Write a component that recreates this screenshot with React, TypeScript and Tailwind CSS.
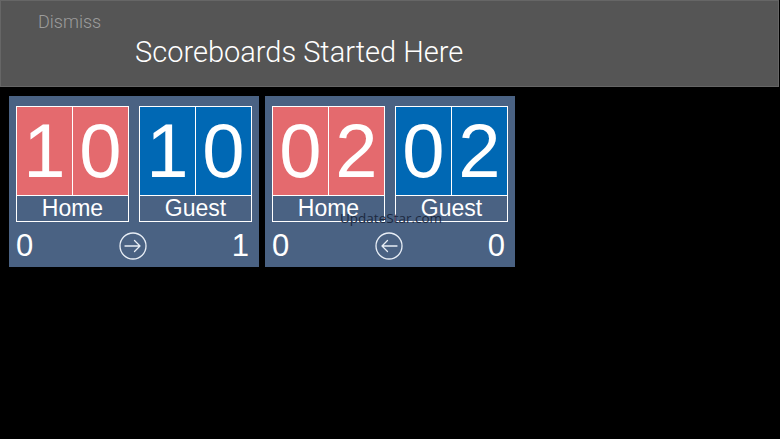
import React from "react";

type Board = {
  home: string;
  guest: string;
  left: string;
  right: string;
  dir: "right" | "left";
};

const boards: Board[] = [
  { home: "10", guest: "10", left: "0", right: "1", dir: "right" },
  { home: "02", guest: "02", left: "0", right: "0", dir: "left" },
];

const ScoreBox = ({ value, label, color }: { value: string; label: string; color: string }) => {
  return (
    <div className="flex flex-col border-[1.5px] border-white">
      <div className={`flex h-[88px] ${color}`}>
        {value.split("").map((d, i) => (
          <div
            key={i}
            className={`flex flex-1 items-center justify-center text-[76px] leading-none text-white ${
              i === 0 ? "border-r-[1.5px] border-white" : ""
            }`}
          >
            {d}
          </div>
        ))}
      </div>
      <div className="flex h-[26px] items-center justify-center border-t-[1.5px] border-white text-[23px] leading-none text-white">
        {label}
      </div>
    </div>
  );
};

const Arrow = ({ dir }: { dir: "right" | "left" }) => (
  <svg width="28" height="28" viewBox="0 0 28 28" fill="none" stroke="#e8eef6" strokeWidth="1.3">
    <circle cx="14" cy="14" r="13" />
    {dir === "right" ? (
      <path d="M6 14h15M15.5 8.5L21 14l-5.5 5.5" strokeLinecap="round" strokeLinejoin="round" />
    ) : (
      <path d="M22 14H7M12.5 8.5L7 14l5.5 5.5" strokeLinecap="round" strokeLinejoin="round" />
    )}
  </svg>
);

export default function App() {
  return (
    <div
      className="relative h-[439px] w-[780px] overflow-hidden bg-black"
      style={{ fontFamily: '"Liberation Sans", Arial, sans-serif' }}
    >
      <div className="h-[87px] w-[779px] border border-[#666] bg-[#555555]">
        <div
          className="pl-[37px] pt-[10px] text-[18px] font-light leading-[22px] text-[#9c9c9c]"
          style={{ fontFamily: 'Roboto, "Liberation Sans", sans-serif' }}
        >
          Dismiss
        </div>
        <div
          className="pl-[134px] pt-[1px] text-[29px] font-light leading-[36px] text-white"
          style={{ fontFamily: 'Roboto, "Liberation Sans", sans-serif' }}
        >
          Scoreboards Started Here
        </div>
      </div>

      <div className="flex gap-[6px] pl-[9px] pt-[9px]">
        {boards.map((b, i) => (
          <div key={i} className="flex h-[171px] w-[250px] flex-col bg-[#4a6283] px-[7px] pt-[10px]">
            <div className="grid grid-cols-2 gap-[10px]">
              <ScoreBox value={b.home} label="Home" color="bg-[#e46a6e]" />
              <ScoreBox value={b.guest} label="Guest" color="bg-[#0068b4]" />
            </div>
            <div className="flex items-center justify-between pr-[3px] pt-[8px] text-[31px] leading-none text-white">
              <span className="w-[20px]">{b.left}</span>
              <Arrow dir={b.dir} />
              <span className="w-[20px] text-right">{b.right}</span>
            </div>
          </div>
        ))}
      </div>

      <div
        className="absolute left-[340px] top-[212px] text-[13.5px] leading-none text-[#1c2940]"
        style={{ fontFamily: '"Open Sans", sans-serif' }}
      >
        UpdateStar.com
      </div>
    </div>
  );
}
